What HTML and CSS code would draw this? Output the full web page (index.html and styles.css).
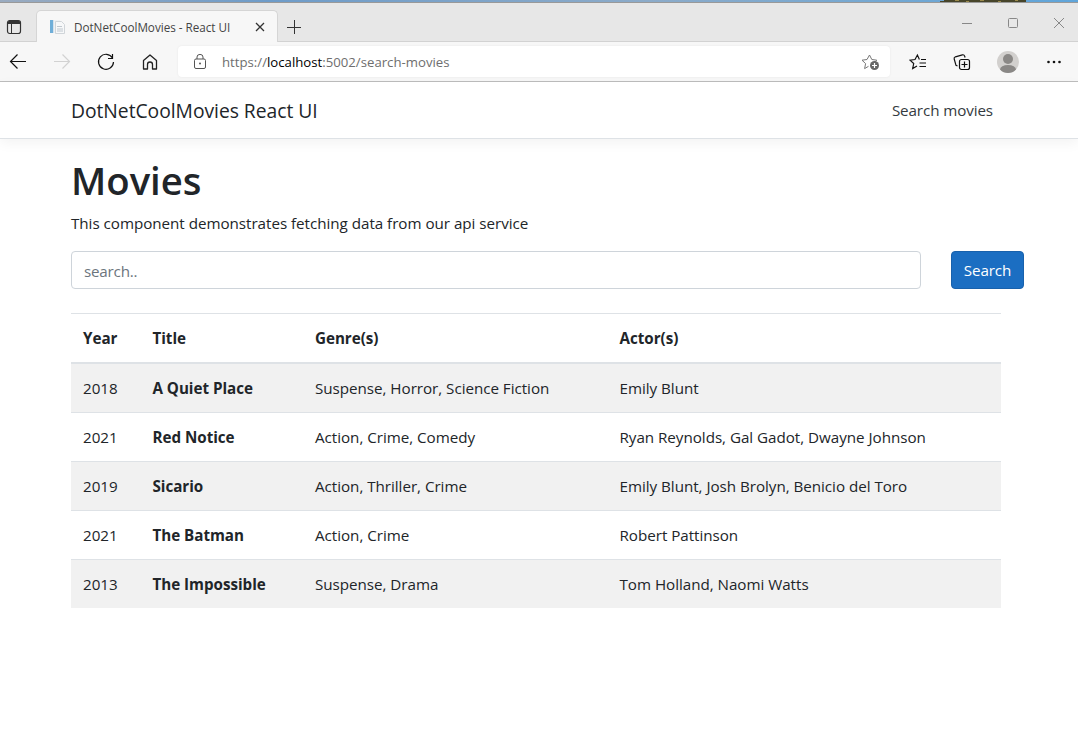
FILE: index.html
```html
<!DOCTYPE html>
<html lang="en">
<head>
<meta charset="utf-8">
<title>DotNetCoolMovies - React UI</title>
<link rel="stylesheet" href="styles.css">
</head>
<body>
<div class="desktop"><svg width="140" height="2" viewBox="0 0 140 2"><path fill="#47452a" d="M2 2V1h4V0h82v2z"/><path fill="#9a8a4c" d="M17 0h4v1h-4zM28 1h3v1h-3zM42 0h4v1h-4zM60 1h3v1h-3zM77 0h3v1h-3z"/></svg></div>
<header class="browser">
  <div class="tabs">
    <svg class="panel-icon" width="16" height="16" viewBox="0 0 16 16"><rect x="1.500" y="1.500" width="13" height="13" rx="2.200" fill="none" stroke="#333" stroke-width="1.200"/><path d="M5.500 5v9" stroke="#333"/><path d="M2 3a1 1 0 0 1 1-1h10a1 1 0 0 1 1 1v2H2z" fill="#333"/></svg>
    <div class="tab">
      <svg class="favicon" width="16" height="16" viewBox="0 0 16 16"><path d="M1 1h3v13H1z" fill="#6faed8"/><path d="M4 1h7v13H4z" fill="#eef1f4"/><path d="M4.500 1v13" stroke="#d5e2ec"/><path d="M6.500 2.500h6l3 3v9h-9z" fill="#f7f8f9" stroke="#d0d5d9"/><path d="M8 7.500h5M8 10h6M8 12h6" stroke="#c0c8cf"/></svg>
      <span class="tab-title">DotNetCoolMovies - React UI</span>
      <svg class="tab-close" width="10" height="10" viewBox="0 0 10 10"><path d="M1 1l8 8M9 1l-8 8" stroke="#333" stroke-width="1.3"/></svg>
    </div>
    <svg class="new-tab" width="16" height="16" viewBox="0 0 16 16"><path d="M1 8.500h14M8.500 1v14" stroke="#333"/></svg>
    <div class="window-buttons">
      <svg width="12" height="12" viewBox="0 0 12 12"><path d="M1 6.500h10" stroke="#888"/></svg>
      <svg width="12" height="12" viewBox="0 0 12 12"><rect x="1.500" y="1.500" width="9" height="9" rx="1" fill="none" stroke="#888"/></svg>
      <svg width="12" height="12" viewBox="0 0 12 12"><path d="M1 1l10 10M11 1L1 11" stroke="#888"/></svg>
    </div>
  </div>
  <div class="toolbar">
    <div class="nav-icons">
      <svg width="18" height="18" viewBox="0 0 18 18"><path d="M17 8.500H1.500M8.500 1.500l-7 7 7 7" fill="none" stroke="#111" stroke-width="1.2"/></svg>
      <svg width="18" height="18" viewBox="0 0 18 18"><path d="M1 8.500h15.500M9.500 1.500l7 7-7 7" fill="none" stroke="#d2d2d2" stroke-width="1.2"/></svg>
      <svg width="18" height="18" viewBox="0 0 18 18"><path d="M15.500 5A7.500 7.500 0 1 0 16.500 9M15.500 1v4.500H11" fill="none" stroke="#111" stroke-width="1.2"/></svg>
      <svg width="18" height="18" viewBox="0 0 18 18"><path d="M2.500 7.500L9 2l6.500 5.500V16h-4v-4.500a2.500 2.500 0 0 0-5 0V16h-4z" fill="none" stroke="#222" stroke-width="1.3" stroke-linejoin="round"/></svg>
    </div>
    <div class="address">
      <svg class="lock" width="14" height="16" viewBox="0 0 14 16"><rect x="1.500" y="5" width="11" height="9.500" rx="1.500" fill="none" stroke="#555"/><path d="M4 5V3a3 2.600 0 0 1 6 0v2" fill="none" stroke="#555"/><circle cx="7" cy="9.500" r="1" fill="#555"/></svg>
      <span class="url">https://<b>localhost</b>:5002/search-movies</span>
      <svg class="add-star" width="19" height="18" viewBox="0 0 19 18"><path d="M7.500 13.300L3.600 15.600l1-5L1 7.200l5-.7L8.500 2l2.300 4.500 5 .7-1.500 1.500" fill="none" stroke="#777"/><circle cx="13.500" cy="12.500" r="4.500" fill="#666"/><path d="M11 12.500h5M13.500 10v5" stroke="#fff" stroke-width="1.200"/></svg>
    </div>
    <div class="actions">
      <svg class="favorites" width="18" height="18" viewBox="0 0 18 18"><path d="M8 13l-4.300 2.500 1-5L1 7.200l5-.7L8.400 2l2 4.500M12 6.500h5M10.500 10H17M10.500 13.500H17" fill="none" stroke="#111" stroke-width="1.200"/></svg>
      <svg class="collections" width="18" height="18" viewBox="0 0 18 18"><rect x="6.500" y="6.500" width="10" height="10" rx="2" fill="none" stroke="#111" stroke-width="1.200"/><path d="M11.500 8.500v6M8.500 11.500h6M4.500 13L3 12.300 1.200 6c-.3-1 .2-1.800 1.200-2.200l7-2c1-.2 1.900.2 2.200 1.200l.5 1.500" fill="none" stroke="#111" stroke-width="1.200"/></svg>
      <svg class="avatar" width="22" height="22" viewBox="0 0 22 22"><clipPath id="avatar-clip"><circle cx="11" cy="11" r="11"/></clipPath><circle cx="11" cy="11" r="11" fill="#d2d0ce"/><g clip-path="url(#avatar-clip)" fill="#8a8886"><circle cx="11" cy="8" r="5"/><ellipse cx="11" cy="18.500" rx="8" ry="4.500"/></g></svg>
      <svg class="more" width="16" height="4" viewBox="0 0 16 4"><g fill="#111"><circle cx="2.500" cy="2" r="1.300"/><circle cx="8" cy="2" r="1.300"/><circle cx="13.500" cy="2" r="1.300"/></g></svg>
    </div>
  </div>
</header>
<nav class="navbar"><a class="brand">DotNetCoolMovies React UI</a><a class="nav-link">Search movies</a></nav>
<main class="content">
  <h1 class="title">Movies</h1>
  <p class="intro">This component demonstrates fetching data from our api service</p>
  <form class="search"><input class="search-input" type="text" placeholder="search.."><button class="search-button" type="button">Search</button></form>
  <table class="movies">
    <colgroup><col class="col-year"><col class="col-title"><col class="col-genre"><col></colgroup>
    <thead><tr><th>Year</th><th>Title</th><th>Genre(s)</th><th>Actor(s)</th></tr></thead>
    <tbody>
      <tr><td>2018</td><td class="name">A Quiet Place</td><td>Suspense, Horror, Science Fiction</td><td>Emily Blunt</td></tr>
      <tr><td>2021</td><td class="name">Red Notice</td><td>Action, Crime, Comedy</td><td>Ryan Reynolds, Gal Gadot, Dwayne Johnson</td></tr>
      <tr><td>2019</td><td class="name">Sicario</td><td>Action, Thriller, Crime</td><td>Emily Blunt, Josh Brolyn, Benicio del Toro</td></tr>
      <tr><td>2021</td><td class="name">The Batman</td><td>Action, Crime</td><td>Robert Pattinson</td></tr>
      <tr><td>2013</td><td class="name">The Impossible</td><td>Suspense, Drama</td><td>Tom Holland, Naomi Watts</td></tr>
    </tbody>
  </table>
</main>
</body>
</html>
```
FILE: styles.css
```css
* { box-sizing: border-box; }
body { margin: 0; background: #fff; color: #212529; font: 15.2px/24px "Open Sans", "Noto Sans", sans-serif; letter-spacing: -.03px; overflow: hidden; }
svg { display: block; flex: none; }

.desktop { height: 2px; display: flex; justify-content: flex-end; background: linear-gradient(90deg, #9aabc0, #6e9cc9 25%, #8cabc9 60%, #5fa5da); }
.browser { height: 80px; border-top: 1px solid #999; border-bottom: 1px solid #bdbdbd; background: #f7f7f7; letter-spacing: 0; }
.tabs { height: 39px; display: flex; align-items: flex-end; background: #e7e7e7; box-shadow: inset 0 -1px #d2d2d2; }
.panel-icon { margin: 0 15px 7px 6px; }
.tab { width: 242px; height: 32px; margin-left: -1px; padding: 0 12px 0 12px; display: flex; align-items: center; background: #f7f7f7; border: 1px solid #d5d5d5; border-bottom: 0; border-radius: 5px 5px 0 0; }
.tab-title { flex: 1; margin-left: 9px; color: #444; font-size: 11.7px; line-height: 16px; letter-spacing: -.02px; white-space: nowrap; }
.new-tab { margin: 0 0 7px 8px; }
.window-buttons { margin: 0 13px 13px auto; display: flex; gap: 34px; }

.toolbar { height: 39px; display: flex; align-items: center; }
.nav-icons { width: 178px; padding-left: 9px; display: flex; gap: 26px; }
.address { width: 712px; height: 31px; padding: 0 10px 0 15px; display: flex; align-items: center; background: #fff; border-radius: 4px; box-shadow: 0 0 2px #e5e5e5; }
.url { flex: 1; margin-left: 15px; color: #6e6e6e; font-size: 13.2px; }
.url b { color: #000; font-weight: 400; }
.actions { flex: 1; display: flex; align-items: center; padding-left: 19px; }
.collections { margin-left: 26px; }
.avatar { margin-left: 26px; }
.more { margin-left: 27px; }

.navbar { height: 57px; padding: 0 85px 0 71px; display: flex; align-items: center; justify-content: space-between; border-bottom: 1px solid #dee2e6; box-shadow: 0 4px 12px rgba(0, 0, 0, .05); }
.brand { padding-top: 1px; font-size: 19.3px; }
.nav-link { color: #343a40; letter-spacing: -.1px; }

.content { width: 953px; margin-left: 71px; padding-top: 17px; }
.title { margin: 0 0 7px; font-size: 38.3px; line-height: 48px; font-weight: 600; letter-spacing: 0; }
.intro { margin: 0 0 16px; }
.search { display: flex; justify-content: space-between; margin: 0 0 24px; }
.search-input { width: 850px; height: 38px; padding: 2px 12px 0; font: inherit; letter-spacing: -.2px; border: 1px solid #ced4da; border-radius: 4px; }
.search-input::placeholder { color: #6c757d; opacity: 1; }
.search-button { width: 73px; height: 38px; padding: 0; font: inherit; letter-spacing: -.1px; color: #fff; background: #1b6ec2; border: 1px solid #1861ac; border-radius: 4px; }

.movies { width: 930px; table-layout: fixed; border-collapse: separate; border-spacing: 0; }
.col-year { width: 69.5px; }
.col-title { width: 162.5px; }
.col-genre { width: 304.5px; }
.movies th, .movies td { height: 49px; padding: 0 12px 1px; text-align: left; border-top: 1px solid #dee2e6; white-space: nowrap; }
.movies th { height: 51px; border-bottom: 2px solid #dee2e6; }
.movies tbody tr:first-child td { border-top: 0; height: 48px; }
.movies tbody tr:nth-child(odd) { background: #f1f1f1; }
.movies .name { font-weight: 700; }
```
